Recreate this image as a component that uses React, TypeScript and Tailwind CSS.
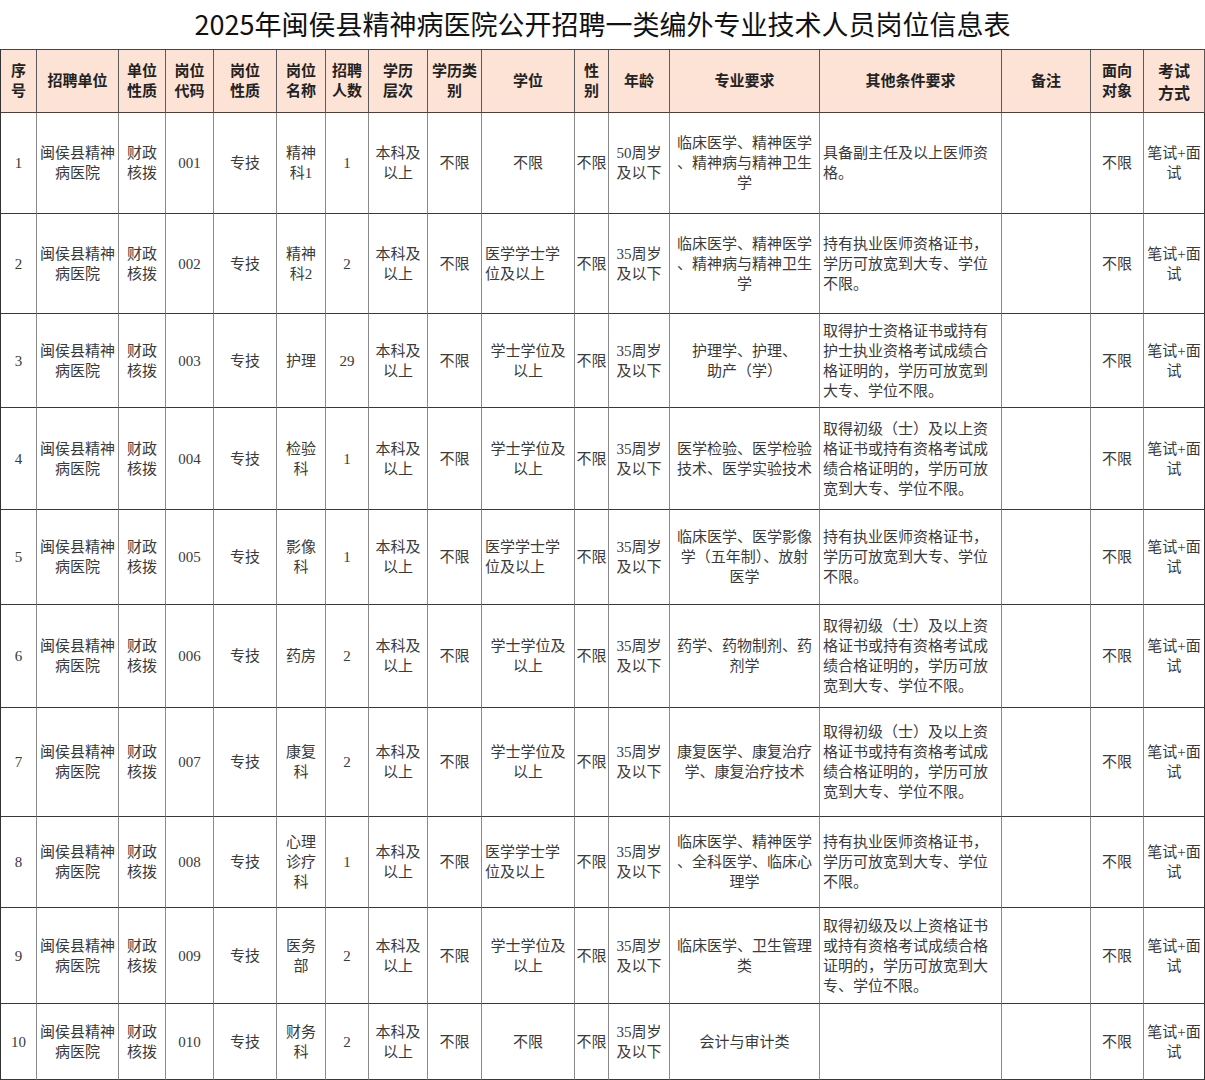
import React from "react";

type Align = "c" | "l";
type Cell = string | string[] | { t: string[]; a: Align };

const cols = [
  "w-[36px]",
  "w-[82px]",
  "w-[47px]",
  "w-[48px]",
  "w-[63px]",
  "w-[49px]",
  "w-[43px]",
  "w-[59px]",
  "w-[54px]",
  "w-[93px]",
  "w-[34px]",
  "w-[61px]",
  "w-[150px]",
  "w-[182px]",
  "w-[89px]",
  "w-[53px]",
  "w-[61px]",
];

const heads: string[][] = [
  ["序", "号"],
  ["招聘单位"],
  ["单位", "性质"],
  ["岗位", "代码"],
  ["岗位", "性质"],
  ["岗位", "名称"],
  ["招聘", "人数"],
  ["学历", "层次"],
  ["学历类", "别"],
  ["学位"],
  ["性", "别"],
  ["年龄"],
  ["专业要求"],
  ["其他条件要求"],
  ["备注"],
  ["面向", "对象"],
  ["考试", "方式"],
];

const unit = ["闽侯县精神", "病医院"];
const fin = ["财政", "核拨"];
const level = ["本科及", "以上"];
const bach = ["学士学位及", "以上"];
const medBach: Cell = { t: ["医学学士学", "位及以上"], a: "l" };
const exam = ["笔试+面", "试"];
const age35 = ["35周岁", "及以下"];
const cond2: Cell = { t: ["持有执业医师资格证书，", "学历可放宽到大专、学位", "不限。"], a: "l" };
const cond4: Cell = {
  t: ["取得初级（士）及以上资", "格证书或持有资格考试成", "绩合格证明的，学历可放", "宽到大专、学位不限。"],
  a: "l",
};

type Row = { h: string; cells: Cell[] };

function row(
  h: string,
  no: string,
  code: string,
  name: Cell,
  count: string,
  degree: Cell,
  age: Cell,
  major: Cell,
  other: Cell
): Row {
  return {
    h,
    cells: [no, unit, fin, code, "专技", name, count, level, "不限", degree, "不限", age, major, other, "", "不限", exam],
  };
}

const rows: Row[] = [
  row("h-[101px]", "1", "001", ["精神", "科1"], "1", "不限", ["50周岁", "及以下"], ["临床医学、精神医学", "、精神病与精神卫生", "学"], {
    t: ["具备副主任及以上医师资", "格。"],
    a: "l",
  }),
  row("h-[100px]", "2", "002", ["精神", "科2"], "2", medBach, age35, ["临床医学、精神医学", "、精神病与精神卫生", "学"], cond2),
  row("h-[94px]", "3", "003", "护理", "29", bach, age35, ["护理学、护理、", "助产（学）"], {
    t: ["取得护士资格证书或持有", "护士执业资格考试成绩合", "格证明的，学历可放宽到", "大专、学位不限。"],
    a: "l",
  }),
  row("h-[102px]", "4", "004", ["检验", "科"], "1", bach, age35, ["医学检验、医学检验", "技术、医学实验技术"], cond4),
  row("h-[95px]", "5", "005", ["影像", "科"], "1", medBach, age35, ["临床医学、医学影像", "学（五年制）、放射", "医学"], cond2),
  row("h-[103px]", "6", "006", "药房", "2", bach, age35, ["药学、药物制剂、药", "剂学"], cond4),
  row("h-[109px]", "7", "007", ["康复", "科"], "2", bach, age35, ["康复医学、康复治疗", "学、康复治疗技术"], cond4),
  row("h-[91px]", "8", "008", ["心理", "诊疗", "科"], "1", medBach, age35, ["临床医学、精神医学", "、全科医学、临床心", "理学"], cond2),
  row("h-[96px]", "9", "009", ["医务", "部"], "2", bach, age35, ["临床医学、卫生管理", "类"], {
    t: ["取得初级及以上资格证书", "或持有资格考试成绩合格", "证明的，学历可放宽到大", "专、学位不限。"],
    a: "l",
  }),
  row("h-[76px]", "10", "010", ["财务", "科"], "2", "不限", age35, "会计与审计类", ""),
];

function lines(c: Cell): { t: string[]; a: Align } {
  if (typeof c === "string") return { t: c ? [c] : [], a: "c" };
  if (Array.isArray(c)) return { t: c, a: "c" };
  return c;
}

export default function App() {
  return (
    <div className="w-[1205px] bg-white font-['Liberation_Serif','Noto_Sans_CJK_SC',serif]">
      <div className="flex h-[49px] items-center justify-center font-['Noto_Sans_CJK_SC','Noto_Sans',sans-serif] text-[27px] text-[#111]">
        2025年闽侯县精神病医院公开招聘一类编外专业技术人员岗位信息表
      </div>
      <table className="table-fixed border-separate border-spacing-0 border-l border-t border-l-[#333] border-t-[#444] text-[15px] leading-[20px] text-[#3a3a3a]">
        <colgroup>
          {cols.map((w, i) => (
            <col key={i} className={w} />
          ))}
        </colgroup>
        <thead>
          <tr className="h-[63px] bg-[#fce3d5]">
            {heads.map((h, i) => (
              <th
                key={i}
                className={`border-b border-r border-b-[#4a3f3a] border-r-[#5a5a5a] px-[1px] text-center align-middle font-bold text-[#222] ${
                  i === 16 ? "font-['Noto_Sans_CJK_SC',sans-serif] text-[16px] leading-[22px] text-[#111]" : ""
                }`}
              >
                {h.map((l, j) => (
                  <div key={j} className="whitespace-nowrap">
                    {l}
                  </div>
                ))}
              </th>
            ))}
          </tr>
        </thead>
        <tbody>
          {rows.map((r, ri) => (
            <tr key={ri} className={r.h}>
              {r.cells.map((c, ci) => {
                const { t, a } = lines(c);
                return (
                  <td
                    key={ci}
                    className={`border-b border-r border-b-[#3a3a3a] align-middle ${
                      a === "l" ? "pl-[3px] text-left" : "px-[1px] text-center"
                    } ${ci === 16 ? "border-r-[#333]" : "border-r-[#8a8a8a]"}`}
                  >
                    {t.map((l, j) => (
                      <div key={j} className="whitespace-nowrap">
                        {l}
                      </div>
                    ))}
                  </td>
                );
              })}
            </tr>
          ))}
        </tbody>
      </table>
    </div>
  );
}
